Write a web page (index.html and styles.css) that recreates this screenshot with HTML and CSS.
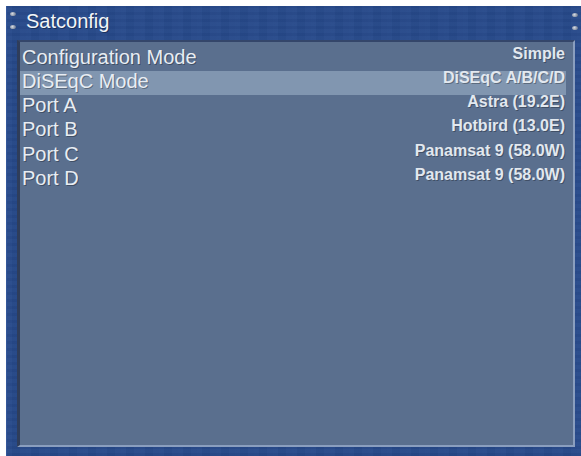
FILE: index.html
```html
<!DOCTYPE html>
<html>
<head>
<meta charset="utf-8">
<title>Satconfig</title>
<link rel="stylesheet" href="styles.css">
</head>
<body>
<div class="frame">
  <span class="screw s-tl1"></span>
  <span class="screw s-tl2"></span>
  <span class="screw s-tr1"></span>
  <span class="screw s-tr2"></span>
  <div class="title">Satconfig</div>
  <div class="panel">
    <ul class="list">
      <li class="row"><span class="label">Configuration Mode</span><span class="value">Simple</span></li>
      <li class="row selected"><span class="label">DiSEqC Mode</span><span class="value">DiSEqC A/B/C/D</span></li>
      <li class="row"><span class="label">Port A</span><span class="value">Astra (19.2E)</span></li>
      <li class="row"><span class="label">Port B</span><span class="value">Hotbird (13.0E)</span></li>
      <li class="row"><span class="label">Port C</span><span class="value">Panamsat 9 (58.0W)</span></li>
      <li class="row"><span class="label">Port D</span><span class="value">Panamsat 9 (58.0W)</span></li>
    </ul>
  </div>
</div>
</body>
</html>
```

FILE: styles.css
```css
html, body {
  margin: 0;
  padding: 0;
  background: #ffffff;
}

body {
  width: 581px;
  height: 456px;
  overflow: hidden;
  font-family: "Liberation Sans", Arial, sans-serif;
}

.frame {
  position: relative;
  margin: 6px 0 0 6px;
  width: 575px;
  height: 450px;
  box-sizing: border-box;
  display: flex;
  flex-direction: column;
  background-color: #27498a;
  background-image:
    repeating-linear-gradient(90deg, rgba(255,255,255,0.015) 0 5px, rgba(0,0,0,0.02) 5px 13px, rgba(255,255,255,0.01) 13px 19px),
    repeating-linear-gradient(0deg, rgba(0,0,0,0.025) 0 3px, rgba(255,255,255,0.015) 3px 7px);
  border-left: 1px solid #34579a;
}

.screw {
  position: absolute;
  width: 6px;
  height: 4px;
  border-radius: 50%;
  background: radial-gradient(circle at 40% 40%, #d8dde6 0, #9aa4b4 45%, #4d5d7c 100%);
}
.s-tl1 { left: 3px; top: 6px; }
.s-tl2 { left: 3px; top: 19px; }
.s-tr1 { right: 3px; top: 7px; }
.s-tr2 { right: 3px; top: 20px; }

.title {
  height: 34px;
  box-sizing: border-box;
  padding: 5px 0 0 19px;
  font-size: 20px;
  line-height: 20px;
  color: #f2f5f8;
  text-shadow: 1px 1px 0 rgba(0, 0, 0, 0.35);
}

.panel {
  flex: 1;
  margin: 0 6px 9px 10px;
  background: #5a6f8e;
  border-left: 3px solid #2f3d5a;
  border-top: 2px solid #34466a;
  border-right: 2px solid #8a9ebe;
  border-bottom: 2px solid #8a9ebe;
}

.list {
  list-style: none;
  margin: 0;
  padding: 4.8px 7px 0 0;
}

.row {
  height: 24.2px;
  display: flex;
  justify-content: space-between;
  align-items: flex-start;
  padding: 0 1px 0 2px;
  color: #e8edf3;
  text-shadow: 1px 1px 0 rgba(0, 0, 0, 0.3);
}

.row.selected {
  background: #8196b0;
}

.label {
  font-size: 20px;
  line-height: 20px;
}

.value {
  font-size: 16px;
  line-height: 14px;
  font-weight: bold;
  color: #e2e8ef;
}
```
